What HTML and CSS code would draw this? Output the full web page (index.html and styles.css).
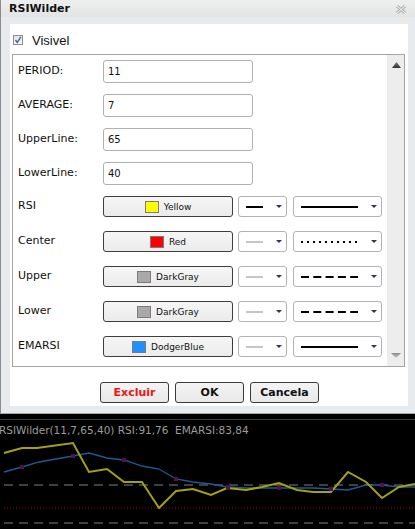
FILE: index.html
```html
<!DOCTYPE html>
<html>
<head>
<meta charset="utf-8">
<link rel="stylesheet" href="styles.css">
</head>
<body>
<div class="dialog">
  <div class="titlebar">
    <span class="title">RSIWilder</span>
    <svg class="close" width="10" height="9" viewBox="0 0 10 9">
      <path d="M1 1 L9 8 M9 1 L1 8" stroke="#b4b4b4" stroke-width="3" fill="none"/>
      <path d="M1 1 L9 8 M9 1 L1 8" stroke="#f4f4f4" stroke-width="1" fill="none"/>
    </svg>
  </div>
  <div class="panel">
    <div class="visible">
      <span class="checkbox">
        <svg width="8" height="8" viewBox="0 0 8 8"><path d="M1.5 4 L3.3 6.5 L6.8 0.8" stroke="#4e5f8a" stroke-width="1.4" fill="none"/></svg>
      </span>
      <span>Visivel</span>
    </div>
    <div class="scrollbox">
      <div class="content">
        <div class="row"><span class="label">PERIOD:</span><input class="field" type="text" value="11"></div>
        <div class="row"><span class="label">AVERAGE:</span><input class="field" type="text" value="7"></div>
        <div class="row"><span class="label">UpperLine:</span><input class="field" type="text" value="65"></div>
        <div class="row"><span class="label">LowerLine:</span><input class="field" type="text" value="40"></div>

        <div class="crow first">
          <span class="label">RSI</span>
          <button class="color-btn"><span class="swatch sw-yellow"></span>Yellow</button>
          <div class="select small"><span class="lw black"></span><span class="arrow"></span></div>
          <div class="select large">
            <svg class="ls" width="57" height="2"><line x1="0" y1="1" x2="57" y2="1" stroke="#000" stroke-width="2"/></svg>
            <span class="arrow"></span>
          </div>
        </div>
        <div class="crow">
          <span class="label">Center</span>
          <button class="color-btn"><span class="swatch sw-red"></span>Red</button>
          <div class="select small"><span class="lw gray"></span><span class="arrow"></span></div>
          <div class="select large">
            <svg class="ls" width="57" height="2"><line x1="0" y1="1" x2="57" y2="1" stroke="#000" stroke-width="2" stroke-dasharray="2 4"/></svg>
            <span class="arrow"></span>
          </div>
        </div>
        <div class="crow">
          <span class="label">Upper</span>
          <button class="color-btn"><span class="swatch sw-gray"></span>DarkGray</button>
          <div class="select small"><span class="lw gray"></span><span class="arrow"></span></div>
          <div class="select large">
            <svg class="ls" width="57" height="2"><line x1="0" y1="1" x2="57" y2="1" stroke="#000" stroke-width="2" stroke-dasharray="8 4.3"/></svg>
            <span class="arrow"></span>
          </div>
        </div>
        <div class="crow">
          <span class="label">Lower</span>
          <button class="color-btn"><span class="swatch sw-gray"></span>DarkGray</button>
          <div class="select small"><span class="lw gray"></span><span class="arrow"></span></div>
          <div class="select large">
            <svg class="ls" width="57" height="2"><line x1="0" y1="1" x2="57" y2="1" stroke="#000" stroke-width="2" stroke-dasharray="8 4.3"/></svg>
            <span class="arrow"></span>
          </div>
        </div>
        <div class="crow">
          <span class="label">EMARSI</span>
          <button class="color-btn"><span class="swatch sw-blue"></span>DodgerBlue</button>
          <div class="select small"><span class="lw gray"></span><span class="arrow"></span></div>
          <div class="select large">
            <svg class="ls" width="57" height="2"><line x1="0" y1="1" x2="57" y2="1" stroke="#000" stroke-width="2"/></svg>
            <span class="arrow"></span>
          </div>
        </div>
      </div>
      <div class="scrollbar">
        <svg width="9" height="6" viewBox="0 0 9 6"><defs><linearGradient id="gu" x1="0" y1="0" x2="0" y2="1"><stop offset="0" stop-color="#777"/><stop offset="1" stop-color="#333"/></linearGradient></defs><polygon points="4.5,0 9,6 0,6" fill="url(#gu)"/></svg>
        <svg width="10" height="5" viewBox="0 0 10 5"><defs><linearGradient id="gd" x1="0" y1="0" x2="0" y2="1"><stop offset="0" stop-color="#8a8a8a"/><stop offset="1" stop-color="#c8c8c8"/></linearGradient></defs><polygon points="0,0 10,0 5,5" fill="url(#gd)"/></svg>
      </div>
    </div>
    <div class="actions">
      <button class="btn danger">Excluir</button>
      <button class="btn">OK</button>
      <button class="btn">Cancela</button>
    </div>
  </div>
</div>
<div class="chart">
  <div class="legend">RSIWilder(11,7,65,40) RSI:91,76&nbsp; EMARSI:83,84</div>
  <svg class="plot" width="415" height="91" viewBox="0 438 415 91">
    <line x1="4" y1="485" x2="415" y2="485" stroke="#555" stroke-width="1.5" stroke-dasharray="9 6"/>
    <line x1="4" y1="523" x2="415" y2="523" stroke="#555" stroke-width="1.5" stroke-dasharray="9 6"/>
    <line x1="4" y1="508" x2="415" y2="508" stroke="#a00000" stroke-width="1" stroke-dasharray="1 2"/>
    <polyline fill="none" stroke="#1d5b94" stroke-width="1.3" points="4,472 22,467 39,462 73,456 89,453 107,458 124,460 142,466 159,469 176,479 193,482 211,484 227,487 246,488 262,488 279,488 297,488 313,488 331,489 348,490 366,485 382,485 399,487 415,487"/>
    <polyline fill="none" stroke="#a3a312" stroke-width="2" points="4,453 22,448 37,448 73,443 89,472 107,469 124,482 142,482 159,508 176,491 193,489 211,495 227,488 246,490 262,487 279,483 297,490 313,492 331,492 348,472 366,482 382,498 399,487 415,484"/>
    <g fill="#54104e">
      <rect x="20" y="465" width="4" height="4"/>
      <rect x="71" y="454" width="4" height="4"/>
      <rect x="122" y="458" width="4" height="4"/>
      <rect x="174" y="477" width="4" height="4"/>
      <rect x="226" y="485" width="4" height="4"/>
      <rect x="277" y="486" width="4" height="4"/>
      <rect x="329" y="487" width="4" height="4"/>
      <rect x="380" y="483" width="4" height="4"/>
    </g>
  </svg>
</div>
</body>
</html>
```

FILE: styles.css
```css
* { box-sizing: border-box; }
html, body {
  margin: 0;
  padding: 0;
  background: #000;
  width: 415px;
  height: 529px;
  overflow: hidden;
}
body {
  font-family: "DejaVu Sans", sans-serif;
  font-size: 11px;
  color: #000;
}
.dialog {
  width: 415px;
  height: 414px;
  background: #e8ebee;
  border-left: 1px solid #8c8c8c;
  border-bottom: 1px solid #a6a6a6;
}
.titlebar {
  height: 17px;
  display: flex;
  align-items: center;
  justify-content: space-between;
  padding: 0 9px 0 8px;
  background: linear-gradient(#eeeeee, #e3e4e5);
}
.title {
  font-weight: bold;
  font-size: 11px;
  color: #111;
}
.close { display: block; margin-top: 1px; }
.panel {
  margin: 7px 7px 0 9px;
  height: 382px;
  background: #fff;
  display: flex;
  flex-direction: column;
}
.visible {
  display: flex;
  align-items: center;
  gap: 9px;
  height: 14px;
  margin: 9px 0 0 3px;
  font-family: "Liberation Sans", sans-serif;
  font-size: 13px;
  color: #111;
}
.checkbox {
  width: 10px;
  height: 10px;
  border: 1px solid #8e8f8f;
  background: linear-gradient(#e2e3ea, #f6f6f8);
  display: flex;
  align-items: center;
  justify-content: center;
}
.checkbox svg { display: block; }
.scrollbox {
  margin: 7px 3px 0 2px;
  height: 313px;
  border: 1px solid #a4a4a4;
  display: flex;
}
.content {
  flex: 1;
  padding: 5px 0 0 5px;
}
.row {
  display: flex;
  align-items: center;
  height: 23px;
  margin-bottom: 11px;
}
.crow {
  display: flex;
  align-items: center;
  height: 21px;
  margin-bottom: 14px;
}
.crow.first { margin-top: 2px; }
.label {
  width: 85px;
  flex: none;
  font-size: 11px;
  color: #111;
  margin-top: -2px;
}
.field {
  width: 150px;
  height: 23px;
  margin: 0;
  border: 1px solid #b0b0b0;
  border-radius: 3px;
  padding: 0 0 0 4px;
  font-family: "DejaVu Sans", sans-serif;
  font-size: 10px;
  color: #111;
  background: #fff;
  outline: none;
}
.color-btn {
  width: 130px;
  height: 21px;
  margin: 0;
  padding: 0;
  border: 1px solid #3e3e3e;
  border-radius: 3px;
  background: linear-gradient(#f6f6f6, #ebebeb);
  display: flex;
  align-items: center;
  justify-content: center;
  gap: 5px;
  font-family: "DejaVu Sans", sans-serif;
  font-size: 9px;
  color: #111;
}
.swatch {
  width: 14px;
  height: 12px;
  border: 1px solid #7c7c7c;
}
.sw-yellow { background: #ffff00; }
.sw-red { background: #ff0000; }
.sw-gray { background: #a9a9a9; }
.sw-blue { background: #1e90ff; }
.select {
  height: 21px;
  border: 1px solid #b3b3b3;
  border-radius: 3px;
  background: #fff;
  display: flex;
  align-items: center;
  padding-left: 7px;
}
.select.small { width: 49px; margin-left: 5px; }
.select.large { width: 89px; margin-left: 6px; }
.lw {
  width: 17px;
  height: 2px;
}
.lw.black { background: #000; }
.lw.gray { background: #c6c6c6; }
.ls { display: block; }
.arrow {
  margin-left: 13px;
  width: 0;
  height: 0;
  border-left: 3px solid transparent;
  border-right: 3px solid transparent;
  border-top: 3px solid #2e3650;
}
.scrollbar {
  width: 17px;
  background: #ededed;
  display: flex;
  flex-direction: column;
  align-items: center;
  justify-content: space-between;
  padding: 7px 0 8px 1px;
}
.scrollbar svg { display: block; }
.actions {
  display: flex;
  justify-content: center;
  gap: 6px;
  margin-top: 15px;
  padding-left: 1px;
}
.btn {
  width: 69px;
  height: 21px;
  margin: 0;
  padding: 0;
  border: 1px solid #3a3a3a;
  border-radius: 3px;
  background: linear-gradient(#f4f4f4, #e8e8e8);
  font-family: "DejaVu Sans", sans-serif;
  font-weight: bold;
  font-size: 11px;
  color: #111;
}
.btn.danger { color: #f01414; }
.chart {
  margin-top: 5px;
  height: 110px;
  border-top: 1px solid #3c3c3c;
  background: #000;
}
.legend {
  height: 18px;
  padding-top: 2px;
  line-height: 16px;
  font-size: 10.5px;
  color: #9c9c9c;
  white-space: nowrap;
  margin-left: -1px;
}
.plot { display: block; }
```
